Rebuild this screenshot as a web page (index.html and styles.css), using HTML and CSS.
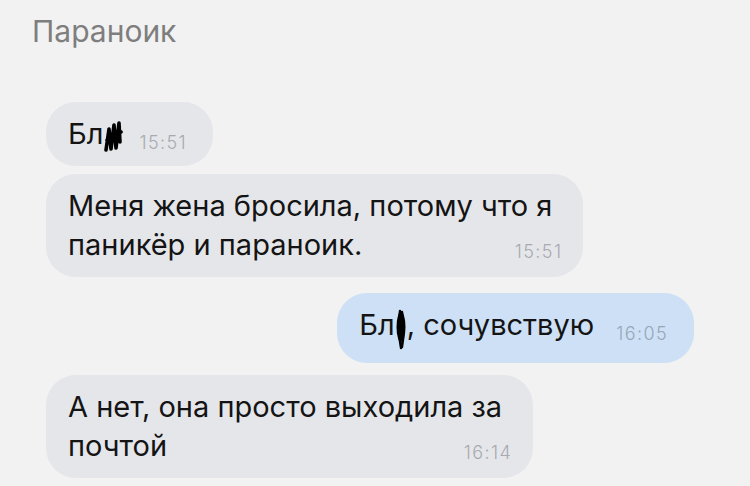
FILE: index.html
```html
<!DOCTYPE html>
<html lang="ru">
<head>
  <meta charset="UTF-8" />
  <meta name="viewport" content="width=device-width, initial-scale=1.0"/>
  <title>Параноик</title>
  <link rel="stylesheet" href="styles.css">
</head>
<body>
  <div class="header">Параноик</div>

  <div class="chat">
    <div class="msg">
      Бл<svg class="blot blot-wide" width="20" height="32" viewBox="0 0 20 32"><path d="M3 30 L6 9 L8 29 L11 5 L13 28 L16 3 L17 22 M4 20 L18 12" fill="none" stroke="#000" stroke-width="3.6" stroke-linecap="round" stroke-linejoin="round"/></svg><span class="time">15:51</span>
    </div>

    <div class="msg long">
      Меня жена бросила, потому что я<br>паникёр и параноик.<span class="time end">15:51</span>
    </div>

    <div class="msg out">
      Бл<svg class="blot blot-tall" width="12" height="42" viewBox="0 0 12 42"><ellipse cx="6" cy="19" rx="4.5" ry="15" fill="#000"/><path d="M5 3 C3 14 4 30 6 40 M7 4 C9 14 9 28 7 39" fill="none" stroke="#000" stroke-width="2.4" stroke-linecap="round"/></svg>, сочувствую<span class="time">16:05</span>
    </div>

    <div class="msg long">
      А нет, она просто выходила за<br>почтой<span class="time end">16:14</span>
    </div>
  </div>
</body>
</html>
```

FILE: styles.css
```css
body {
  margin: 0;
  background: #f2f2f2;
  font-family: Inter, Roboto, sans-serif;
  color: #141414;
}

.header {
  padding: 13px 0 0 32px;
  height: 89px;
  font-size: 30px;
  color: #7e7e7e;
}

.chat {
  display: flex;
  flex-direction: column;
  align-items: flex-start;
  gap: 8px;
  padding: 0 56px 0 46px;
}

.msg {
  display: inline-block;
  background: #e5e6ea;
  border-radius: 30px;
  padding: 12px 26px 13px 22px;
  font-size: 29px;
  line-height: 39px;
}

.msg.long {
  padding-right: 31px;
}

.msg.out {
  align-self: flex-end;
  background: #cde0f5;
  margin: 8px 0 4px;
}

.blot {
  vertical-align: -8px;
}

.blot-tall {
  vertical-align: -15px;
}

.time {
  display: inline-block;
  margin-left: 16px;
  font-size: 18px;
  font-weight: 300;
  letter-spacing: 1.4px;
  line-height: 18px;
  color: #a8aaae;
  vertical-align: -5px;
}

.out .time {
  margin-left: 22px;
  color: #96a6b8;
}

.time.end {
  float: right;
  margin-top: 18px;
  margin-right: -10px;
  vertical-align: baseline;
}
```
